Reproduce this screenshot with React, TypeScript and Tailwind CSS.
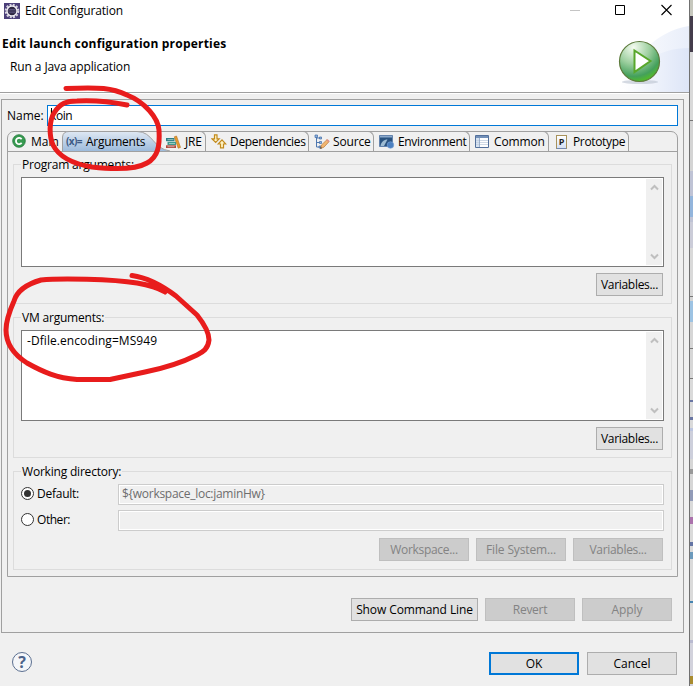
import clsx from "clsx";
import React from "react";

type ButtonProps = {
  label: string;
  className?: string;
  disabled?: boolean;
  primary?: boolean;
};

const Button = ({ label, className, disabled, primary }: ButtonProps) => (
  <button
    disabled={disabled}
    className={clsx(
      "h-[23px] flex items-center justify-center whitespace-nowrap pb-px",
      disabled && "bg-[#cccccc] border border-[#bfbfbf] text-[#838383]",
      primary && "bg-[#e1e1e1] border-2 border-[#0078d7]",
      !disabled && !primary && "bg-[#e1e1e1] border border-[#adadad]",
      className
    )}
  >
    {label}
  </button>
);

const Chevron = ({ down }: { down?: boolean }) => (
  <svg width="9" height="7" viewBox="0 0 9 7" className={clsx(down && "rotate-180")}>
    <path d="M1 5.5 4.5 2 8 5.5" fill="none" stroke="#bfbfbf" strokeWidth="2" />
  </svg>
);

const TextArea = ({ value, className }: { value?: string; className: string }) => (
  <div className={clsx("flex justify-between bg-white border border-[#7a7a7a] p-px", className)}>
    <span className="pl-[4px] tracking-[0.07px]">{value}</span>
    <div className="w-4 bg-[#f0f0f0] flex flex-col items-center justify-between py-[5px]">
      <Chevron />
      <Chevron down />
    </div>
  </div>
);

const Group = ({ title, className, children }: { title: string; className: string; children: React.ReactNode }) => (
  <section className={clsx("border border-[#dcdcdc] px-[7px]", className)}>
    <h2 className="-mt-[9px] h-[18px] w-fit bg-[#f0f0f0] px-px leading-[18px] tracking-[-0.2px]">{title}</h2>
    {children}
  </section>
);

const Radio = ({ checked }: { checked?: boolean }) => (
  <span className="size-[13px] rounded-full border border-[#333] bg-white flex items-center justify-center">
    {checked && <span className="size-[7px] rounded-full bg-[#333]" />}
  </span>
);

const EclipseIcon = () => (
  <svg width="16" height="16" viewBox="0 0 16 16">
    <rect width="16" height="16" fill="#4b3f79" />
    <circle cx="8" cy="8" r="6.3" fill="none" stroke="#d8d5e0" strokeWidth="2" strokeDasharray="2 1.3" />
    <circle cx="8" cy="8" r="5" fill="#2c2640" stroke="#f0eef4" strokeWidth="1.4" />
    <path d="M4.5 6.5h7M4 8h8M4.5 9.7h7" stroke="#6c6392" strokeWidth=".7" />
  </svg>
);

const MainIcon = () => (
  <svg width="14" height="14" viewBox="0 0 14 14">
    <circle cx="7" cy="7" r="6.3" fill="#379a50" stroke="#237a3c" strokeWidth=".8" />
    <path d="M9.6 5.2A3.1 3.1 0 1 0 9.6 8.8" fill="none" stroke="#fff" strokeWidth="1.8" />
  </svg>
);

const JreIcon = () => (
  <svg width="15" height="14" viewBox="0 0 15 14">
    <path d="M0 3h8.500v3.200H0z" fill="#2d7f86" />
    <path d="M1.500 6.800h8.500V10H1.500z" fill="#3d9a8f" />
    <path d="M0 10.300h10V13H0z" fill="#b0483c" />
    <path d="M1.500 4.600h6M3 8.500h6M1.500 11.700h7" stroke="#d7e9df" strokeWidth=".6" />
    <path d="m8.300 1.800 2.200-.8 4 11.400-2.300.8z" fill="#e59b30" stroke="#b36f19" strokeWidth=".6" />
  </svg>
);

const DependenciesIcon = () => (
  <svg width="16" height="15" viewBox="0 0 16 15" fill="#fff3c4" stroke="#c28a1c" strokeWidth="1.2">
    <path d="M3.500.8h2.500v4h2.200L4.700 8.500 1 4.800h2.500z" />
    <path d="M9.500 13.800h3V10h2.300L11 5.800 7.200 10h2.300z" />
  </svg>
);

const SourceIcon = () => (
  <svg width="16" height="16" viewBox="0 0 16 16">
    <path d="M2.500 2v11H6M2.500 4H6M2.500 8.500H6" fill="none" stroke="#4f78b0" />
    <path d="M1 1h2.500v2.500H1zM5.500 3h2v2h-2zM5.500 7.500h2v2h-2zM5 12h2v2H5z" fill="#8fb2dc" stroke="#416ca8" strokeWidth=".7" />
    <path d="m6.500 14.500 1-3.600L13 5.700l2 2-5.100 5.500z" fill="#f2b671" stroke="#b97735" strokeWidth=".7" />
    <path d="m12.300 6.300 1.200-1.200 2 1.800-1 1.300z" fill="#df8f86" />
    <path d="m6.200 14.800.5-2 1.400 1.400z" fill="#444" />
  </svg>
);

const EnvironmentIcon = () => (
  <svg width="16" height="14" viewBox="0 0 16 14">
    <path d="M.5.5h13v11H.5z" fill="#29527f" stroke="#6383ad" />
    <path d="M1 1h12v1.500H1z" fill="#8ba9cc" />
    <path d="M1.500 11C2 7 5 4.500 8.500 4.500L5 11z" fill="#9dbbd2" />
    <circle cx="11.500" cy="10" r="3.300" fill="#4c80c0" stroke="#7da5d7" strokeWidth=".6" />
  </svg>
);

const CommonIcon = () => (
  <svg width="14" height="13" viewBox="0 0 14 13">
    <path d="M.5.5h13v12H.5z" fill="#fff" stroke="#53709b" />
    <path d="M1 1h12v2H1z" fill="#7390b8" />
    <path d="M1 3h3.500v9H1z" fill="#d5e2f1" />
    <path d="M1 5.500h12M1 7.500h12M1 9.500h12" stroke="#c3cfdf" strokeWidth=".8" />
    <path d="M4.500 3v9" stroke="#8ba2c2" strokeWidth=".8" />
  </svg>
);

const PrototypeIcon = () => (
  <span className="w-[11px] h-[14px] border border-[#a8925b] border-b-[#7388ae] bg-linear-to-b from-white to-[#d4e0f4] flex items-center justify-center text-[9px] leading-none font-bold tracking-normal text-[#222]">
    P
  </span>
);

const tabs = [
  { label: "JRE", icon: <JreIcon />, box: "w-[49px] pl-[9px] gap-[4px] tracking-[-0.2px]" },
  { label: "Dependencies", icon: <DependenciesIcon />, box: "w-[103px] pl-[5px] gap-[3px] tracking-[-0.33px]" },
  { label: "Source", icon: <SourceIcon />, box: "w-[65px] pl-[5px] gap-[3px] tracking-[-0.15px]" },
  { label: "Environment", icon: <EnvironmentIcon />, box: "w-[96px] pl-[5px] gap-[3px] tracking-[-0.33px]" },
  { label: "Common", icon: <CommonIcon />, box: "w-[79px] pl-[5px] gap-[5px] tracking-[-0.15px]" },
  { label: "Prototype", icon: <PrototypeIcon />, box: "w-[80px] pl-[7px] gap-[6px] tracking-[-0.35px]" },
];

const TabBar = () => (
  <div className="flex h-[21px] -mx-px -mt-px border-b border-[#a0a0a0] pl-px">
    <div className="flex items-center w-[54px] pl-[4px] gap-[5px]">
      <MainIcon />
      Main
    </div>
    <div className="relative flex items-center w-[95px] pl-[4px] gap-[4px]">
      <svg width="112" height="20" viewBox="0 0 112 20" className="absolute left-0 top-0">
        <defs>
          <linearGradient id="tab" x2="0" y2="1">
            <stop offset="0" stopColor="#dfe8f3" />
            <stop offset="1" stopColor="#9dbbdc" />
          </linearGradient>
        </defs>
        <path d="M.5 20V6Q1 .5 7 .5h68C91 .5 91 18 108 20z" fill="url(#tab)" />
        <path d="M.5 20V6Q1 .5 7 .5h68C91 .5 91 18 108 20" fill="none" stroke="#a0a0a0" />
      </svg>
      <span className="relative text-[10px] font-bold text-[#3c5a85] tracking-[-0.6px]">(x)=</span>
      <span className="relative tracking-[-0.25px]">Arguments</span>
    </div>
    {tabs.map((tab) => (
      <div
        key={tab.label}
        className={clsx("flex items-center border-t border-r border-[#a0a0a0] rounded-tr-[6px] whitespace-nowrap", tab.box)}
      >
        <span className="relative shrink-0">{tab.icon}</span>
        {tab.label}
      </div>
    ))}
  </div>
);

const RunBanner = () => (
  <svg width="90" height="70" viewBox="0 0 90 70">
    <defs>
      <linearGradient id="sky">
        <stop offset="0" stopColor="#fff" />
        <stop offset="1" stopColor="#dde5f7" />
      </linearGradient>
      <radialGradient id="ball" cx=".35" cy=".15" r=".9">
        <stop offset="0" stopColor="#f4fbf0" />
        <stop offset=".45" stopColor="#9dcf9f" />
        <stop offset=".8" stopColor="#44a05c" />
        <stop offset="1" stopColor="#55c21c" />
      </radialGradient>
    </defs>
    <path d="M18 70C35 35 55 10 90 4v66z" fill="url(#sky)" opacity=".65" />
    <path d="M22 70C40 40 60 26 90 26v44z" fill="url(#sky)" />
    <ellipse cx="41" cy="60" rx="18" ry="2" fill="#b9c1cf" opacity=".6" />
    <circle cx="40.500" cy="39.500" r="20" fill="url(#ball)" stroke="#5d7a3c" strokeWidth="1.200" />
    <path d="M35.500 28.500v21.500L51.500 39z" fill="#fff" stroke="#58a72b" strokeWidth="2" />
  </svg>
);

// slices of the editor window that shows behind the dialog
const backdrop = [
  "h-4 bg-[#c6c7bd]",
  "h-9 bg-[#443c4b]",
  "h-[68px] bg-[#d9d9d9]",
  "h-px bg-[#777]",
  "h-[50px] bg-[#d4d4d4]",
  "h-[25px] bg-[#bfc3d5]",
  "h-[21px] bg-[#93b5dc]",
  "h-[5px] bg-[#bfc3d5]",
  "h-[26px] bg-[#cbccd8]",
  "h-[48px] bg-[#d9d9d9]",
  "h-px bg-[#777]",
  "h-[4px] bg-[#d4d4d4]",
  "h-[21px] bg-[#9dc3e3]",
  "h-[26px] bg-[#d6d6d6]",
  "h-px bg-[#777]",
  "h-[29px] bg-[#d6d6d6]",
  "h-px bg-[#777]",
  "h-[21px] bg-[#dadada]",
  "h-[2px] bg-[#6a76a3]",
  "h-[15px] bg-[#dadada]",
  "h-[3px] bg-[#6a76a3]",
  "h-[8px] bg-[#dadada]",
  "h-[3px] bg-[#bcc5df]",
  "h-[28px] bg-[#cdcfdb]",
  "h-[10px] bg-[#d6d6d6]",
  "h-[5px] bg-[#999]",
  "h-[16px] bg-[#d6d6d6]",
  "h-[11px] bg-[#929bb8]",
  "h-[16px] bg-[#dadada]",
  "h-[7px] bg-[#ab72ac]",
  "h-[18px] bg-[#dadada]",
  "h-[4px] bg-[#6475a5]",
  "h-[6px] bg-[#dadada]",
  "h-[7px] bg-[#6c9abc]",
  "h-[42px] bg-[#dadada]",
  "h-[2px] bg-[#4684b0]",
  "h-[37px] bg-[#dadada]",
  "h-[3px] bg-[#b9bad0]",
  "h-[33px] bg-[#d2d2dc]",
  "h-[8px] bg-[#a98c30]",
  "h-[6px] bg-[#d2d2dc]",
];

const Annotations = () => (
  <svg
    width="693"
    height="686"
    viewBox="0 0 693 686"
    className="absolute left-0 top-0 pointer-events-none"
    fill="none"
    stroke="#e81c1c"
    strokeWidth="5"
    strokeLinecap="round"
    strokeLinejoin="round"
  >
    <path d="M66 88.500C100 87 112 88 127 95C145 102 158 118 159 130C160 146 158 157 147 163C135 170 110 169 92 167C74 164 59 157 53 145C49 136 49 121 54 113C60 103 67 101 77 101C95 100 112 102 127 105" />
    <path d="M132 275.500C150 278 164 287 176 296L197 315C205 325 209 333 209 340C208 349 203 352 197 355C183 362 165 368 145 372L110 379.500H77C57 378 43 372 27 363C13 354 6 344 6 330C6 320 10 310 14 301C17 291 27 284 41 280C60 278 112 279 137 283C149 285 157 287 165 292" />
  </svg>
);

export default function App() {
  return (
    <div className="relative flex w-[693px] h-[686px] overflow-hidden bg-[#f0f0f0] font-['Open_Sans','Noto_Sans_CJK_KR',sans-serif] text-[12px] leading-[17px] text-black">
      <main className="w-[689px] flex flex-col">
        <div className="bg-white h-[22px] flex items-center pl-1 pr-[16px] justify-between">
          <div className="flex items-center gap-[5px] pb-px tracking-[-0.17px]">
            <EclipseIcon />
            Edit Configuration
          </div>
          <svg width="104" height="12" viewBox="0 0 104 12" fill="none" className="mb-[3px]">
            <path d="M1 6.500h10" stroke="#c5c5c5" />
            <path d="M46.500 1.500h9v9h-9z" stroke="#000" />
            <path d="m92.500 1 10 10m0-10-10 10" stroke="#000" strokeWidth="1.100" />
          </svg>
        </div>
        <header className="h-[71px] shrink-0 bg-white border-b border-[#a0a0a0] flex justify-between">
          <div className="pt-[13px]">
            <h1 className="pl-[2px] font-bold tracking-[0.2px]">Edit launch configuration properties</h1>
            <p className="pl-[10px] mt-[6px] tracking-[-0.1px]">Run a Java application</p>
          </div>
          <RunBanner />
        </header>
        <div className="h-px shrink-0 bg-white" />

        <div className="mt-[5px] ml-px w-[683px] h-[534px] shrink-0 border border-[#a0a0a0] px-[5px] pt-[5px]">
          <div className="flex items-center h-[21px]">
            <span className="w-[40px]">Name:</span>
            <div className="w-[631px] h-[21px] border border-[#0078d7] bg-white flex items-center pl-[3px] tracking-[-0.4px]">
              <span className="w-px h-[15px] bg-black -mr-[2px]" />
              koin
            </div>
          </div>

          <div className="mt-[5px] w-[671px] h-[446px] border border-[#a0a0a0] rounded-t-[7px]">
            <TabBar />
            <div className="pl-[5px] pt-3">
              <Group title="Program arguments:" className="w-[659px] h-[140px]">
                <TextArea className="mt-[3px] w-[643px] h-[90px]" />
                <Button label="Variables..." className="mt-[6px] ml-[575px] w-[67px] tracking-[-0.3px]" />
              </Group>
              <Group title="VM arguments:" className="mt-[13px] w-[659px] h-[141px]">
                <TextArea value="-Dfile.encoding=MS949" className="mt-[3px] w-[643px] h-[91px]" />
                <Button label="Variables..." className="mt-[6px] ml-[575px] w-[67px] tracking-[-0.3px]" />
              </Group>
              <Group title="Working directory:" className="mt-[13px] w-[659px] h-[99px]">
                <div className="mt-[3px] flex items-center h-[21px]">
                  <label className="w-[97px] flex items-center gap-[3px] pb-[2px] tracking-[-0.25px]">
                    <Radio checked />
                    Default:
                  </label>
                  <div className="w-[546px] h-[21px] border border-[#cccccc] ring-1 ring-inset ring-white pl-[3px]">
                    <span className="text-[#6d6d6d] tracking-[-0.28px]">{"${workspace_loc:jaminHw}"}</span>
                  </div>
                </div>
                <div className="mt-[5px] flex items-center h-[21px]">
                  <label className="w-[97px] flex items-center gap-[3px] pb-[2px] tracking-[-0.45px]">
                    <Radio />
                    Other:
                  </label>
                  <div className="w-[546px] h-[21px] border border-[#cccccc] ring-1 ring-inset ring-white" />
                </div>
                <div className="mt-[7px] flex gap-[7px] pl-[358px]">
                  <Button disabled label="Workspace..." className="w-[90px] tracking-[-0.3px]" />
                  <Button disabled label="File System..." className="w-[90px] tracking-[-0.15px]" />
                  <Button disabled label="Variables..." className="w-[90px] tracking-[-0.3px]" />
                </div>
              </Group>
            </div>
          </div>

          <div className="mt-[21px] flex gap-[7px] justify-end pr-[6px]">
            <Button label="Show Command Line" className="w-[127px] tracking-[-0.1px]" />
            <Button disabled label="Revert" className="w-[90px] tracking-[-0.3px]" />
            <Button disabled label="Apply" className="w-[90px] tracking-[-0.1px]" />
          </div>
        </div>

        <footer className="mt-[19px] flex items-start pl-3 pr-3 gap-[8px]">
          <span className="size-5 shrink-0 rounded-full border border-[#5b6f90] bg-[#f4f6f9] text-[#4c638a] text-[16px] leading-none font-bold flex items-center justify-center">
            ?
          </span>
          <Button primary label="OK" className="w-[90px] ml-auto" />
          <Button label="Cancel" className="w-[90px]" />
        </footer>
      </main>

      <div className="w-px bg-[#707070]" />
      <div className="w-[3px] flex flex-col">
        {backdrop.map((slice, i) => (
          <div key={i} className={clsx("shrink-0", slice)} />
        ))}
      </div>
      <Annotations />
    </div>
  );
}
